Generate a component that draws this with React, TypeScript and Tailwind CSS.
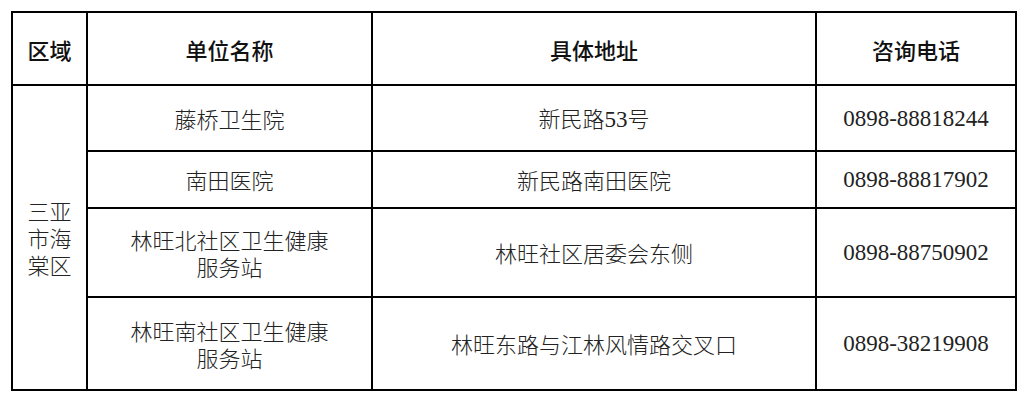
import React from "react";

const cjk = "font-['Noto_Sans_CJK_SC',sans-serif]";
const num = "font-['Liberation_Serif','Noto_Sans_CJK_SC',serif]";

const td = "border-2 border-black text-center align-middle p-0";

export default function App() {
  const rows = [
    {
      name: ["藤桥卫生院"],
      addr: (
        <>
          <span className={`${cjk} font-light`}>新民路</span>
          <span className={`${num} text-[23px]`}>53</span>
          <span className={`${cjk} font-light`}>号</span>
        </>
      ),
      tel: "0898-88818244",
      h: "h-[66px]",
    },
    { name: ["南田医院"], addr: <span className={`${cjk} font-light`}>新民路南田医院</span>, tel: "0898-88817902", h: "h-[57px]" },
    {
      name: ["林旺北社区卫生健康", "服务站"],
      addr: <span className={`${cjk} font-light`}>林旺社区居委会东侧</span>,
      tel: "0898-88750902",
      h: "h-[89px]",
    },
    {
      name: ["林旺南社区卫生健康", "服务站"],
      addr: <span className={`${cjk} font-light`}>林旺东路与江林风情路交叉口</span>,
      tel: "0898-38219908",
      h: "h-[93px]",
    },
  ];
  return (
    <div className="w-[1026px] h-[407px] bg-white pt-[11px] pl-[11px]">
      <table className="border-collapse table-fixed w-[1004px]">
        <colgroup>
          <col className="w-[75px]" />
          <col className="w-[285px]" />
          <col className="w-[444px]" />
          <col className="w-[200px]" />
        </colgroup>
        <thead>
          <tr className="h-[73px]">
            {["区域", "单位名称", "具体地址", "咨询电话"].map((t) => (
              <th key={t} className={`${td} ${cjk} font-medium text-[22px] leading-[28px] text-[#111]`}>
                {t}
              </th>
            ))}
          </tr>
        </thead>
        <tbody>
          {rows.map((r, i) => (
            <tr key={i} className={r.h}>
              {i === 0 && (
                <td rowSpan={4} className={`${td} ${cjk} font-light text-[22px] leading-[27px] text-[#222]`}>
                  三亚<br />市海<br />棠区
                </td>
              )}
              <td className={`${td} ${cjk} font-light text-[22px] leading-[27px] text-[#222]`}>
                {r.name.map((n, j) => (
                  <div key={j}>{n}</div>
                ))}
              </td>
              <td className={`${td} text-[22px] leading-[27px] text-[#222]`}>{r.addr}</td>
              <td className={`${td} ${num} text-[23px] leading-[27px] text-[#222]`}>{r.tel}</td>
            </tr>
          ))}
        </tbody>
      </table>
    </div>
  );
}
